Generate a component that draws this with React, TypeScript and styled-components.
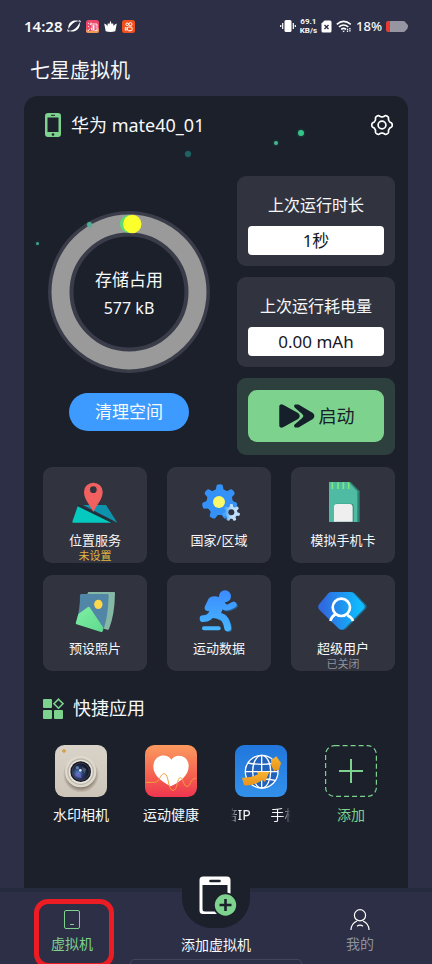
import React from "react";
import styled, { createGlobalStyle, css } from "styled-components";

const color = {
  page: "#2c2f45",
  card: "#1b202b",
  panel: "#31343f",
  green: "#7dd38e",
  blue: "#3d9bff",
  white: "#f7f8fa",
  muted: "#8f919b",
  warn: "#e3b640",
};

const GlobalStyle = createGlobalStyle`
  *, *::before, *::after { box-sizing: border-box; }
  body {
    margin: 0;
    background: ${color.page};
    color: ${color.white};
    font-family: "Noto Sans", "Noto Sans CJK SC", sans-serif;
  }
  button { font: inherit; color: inherit; border: 0; padding: 0; background: none; cursor: pointer; }
  svg { display: block; flex: none; }
  h1, h2, p { margin: 0; font-weight: 400; }
`;

const Page = styled.div`
  min-height: 100vh;
  display: flex;
  flex-direction: column;
  overflow: hidden;
`;

const StatusBar = styled.div`
  height: 52px;
  padding: 0 24px;
  display: flex;
  align-items: center;
  justify-content: space-between;
`;

const StatusGroup = styled.div<{ $gap: number }>`
  display: flex;
  align-items: center;
  gap: ${(p) => p.$gap}px;
`;

const Clock = styled.span`
  font-size: 15px;
  font-weight: 600;
  line-height: 20px;
`;

const Speed = styled.span`
  display: flex;
  flex-direction: column;
  font-family: Roboto, sans-serif;
  font-size: 8px;
  font-weight: 700;
  line-height: 9px;
  text-align: center;
`;

const Percent = styled.span`
  font-size: 13px;
  font-weight: 500;
  line-height: 20px;
`;

const Title = styled.h1`
  padding: 5px 30px 11px;
  font-size: 20px;
  line-height: 28px;
`;

const Card = styled.main`
  position: relative;
  flex: 1;
  margin: 0 24px;
  padding-bottom: 60px;
  background: ${color.card};
  border-radius: 14px 14px 0 0;
`;

const Spark = styled.i<{ $x: number; $y: number; $size: number; $color: string }>`
  position: absolute;
  left: ${(p) => p.$x}px;
  top: ${(p) => p.$y}px;
  width: ${(p) => p.$size}px;
  height: ${(p) => p.$size}px;
  border-radius: 50%;
  background: ${(p) => p.$color};
  box-shadow: 0 0 3px ${(p) => p.$color}66;
`;

const CardHeader = styled.header`
  display: flex;
  align-items: center;
  height: 58px;
  padding: 0 14px 0 21px;
  gap: 10px;
`;

const DeviceName = styled.h2`
  flex: 1;
  font-size: 18px;
  line-height: 24px;
`;

const Overview = styled.section`
  display: grid;
  grid-template-columns: 172fr 158fr;
  gap: 22px;
  padding: 22px 13px 0 19px;
`;

const Storage = styled.div`
  display: flex;
  flex-direction: column;
  align-items: center;
  gap: 20px;
  padding-top: 35px;
`;

const Gauge = styled.div`
  display: grid;
  place-items: center;
  > * { grid-area: 1 / 1; }
`;

const GaugeText = styled.div`
  padding-top: 4px;
  text-align: center;
  line-height: 28px;
`;

const GaugeLabel = styled.p`
  font-size: 17px;
`;

const GaugeValue = styled.p`
  font-size: 16px;
`;

const CleanButton = styled.button`
  width: 120px;
  height: 38px;
  border-radius: 19px;
  background: ${color.blue};
  font-size: 17px;
  line-height: 24px;
`;

const Stats = styled.div`
  display: flex;
  flex-direction: column;
  gap: 11px;
`;

const StatPanel = styled.div`
  display: flex;
  flex-direction: column;
  gap: 9px;
  padding: 17px 11px 11px;
  border-radius: 9px;
  background: ${color.panel};
  text-align: center;
`;

const StatLabel = styled.span`
  font-size: 16px;
  line-height: 24px;
`;

const StatValue = styled.output`
  height: 29px;
  border-radius: 4px;
  background: #fff;
  color: #16181f;
  font-size: 17px;
  line-height: 29px;
`;

const LaunchPanel = styled.div`
  padding: 12px 11px 13px;
  border-radius: 9px;
  background: #2d403d;
`;

const LaunchButton = styled.button`
  width: 100%;
  height: 52px;
  display: flex;
  align-items: center;
  justify-content: center;
  gap: 4px;
  border-radius: 9px;
  background: ${color.green};
  color: #16202b;
  font-size: 18px;
  line-height: 24px;
`;

const Tiles = styled.section`
  display: grid;
  grid-template-columns: repeat(3, 1fr);
  gap: 12px 20px;
  padding: 12px 13px 0 19px;
`;

const Tile = styled.button`
  height: 96px;
  display: flex;
  flex-direction: column;
  align-items: center;
  padding-top: 13px;
  border-radius: 9px;
  background: ${color.panel};
`;

const TileLabel = styled.span`
  margin-top: 7px;
  font-size: 13px;
  line-height: 18px;
`;

const TileNote = styled.span<{ $warn?: boolean }>`
  font-size: 11px;
  line-height: 14px;
  color: ${(p) => (p.$warn ? color.warn : color.muted)};
`;

const ShortcutHeader = styled.header`
  display: flex;
  align-items: center;
  gap: 9px;
  padding: 25px 19px;
`;

const ShortcutTitle = styled.h2`
  font-size: 18px;
  line-height: 24px;
`;

const Apps = styled.section`
  display: grid;
  grid-template-columns: repeat(4, 1fr);
  padding: 0 12px;
`;

const Shortcut = styled.button<{ $accent?: boolean }>`
  display: flex;
  flex-direction: column;
  align-items: center;
  gap: 8px;
  font-size: 14px;
  line-height: 20px;
  color: ${(p) => (p.$accent ? color.green : color.white)};
`;

const Ticker = styled.span`
  display: flex;
  justify-content: center;
  gap: 20px;
  width: 60px;
  overflow: hidden;
  white-space: nowrap;
  mask-image: linear-gradient(90deg, transparent, #000 8px, #000 50px, transparent);
`;

const Nav = styled.nav`
  position: relative;
  height: 76px;
  display: grid;
  grid-template-columns: repeat(3, 1fr);
  border-top: 4px solid #262a3d;
`;

const navLabel = css`
  font-size: 14px;
  line-height: 20px;
`;

const NavItem = styled.button<{ $active?: boolean }>`
  position: relative;
  display: flex;
  flex-direction: column;
  align-items: center;
  justify-content: flex-start;
  gap: 4px;
  padding-top: 17px;
  ${navLabel}
  color: ${(p) => (p.$active ? color.green : color.muted)};
`;

const Highlight = styled.span`
  position: absolute;
  top: 7px;
  bottom: -4px;
  left: 50%;
  width: 80px;
  margin-left: -38px;
  border: 5px solid #ec1c24;
  border-radius: 14px;
`;

const AddItem = styled.button`
  display: flex;
  flex-direction: column;
  align-items: center;
  justify-content: flex-start;
  gap: 7px;
  margin-top: -20px;
  ${navLabel}
`;

const Bubble = styled.span`
  width: 68px;
  height: 56px;
  display: flex;
  justify-content: center;
  padding: 4px 0 0 4px;
  border-radius: 0 0 30px 30px;
  background: ${color.card};
`;

const HomeHandle = styled.span`
  position: absolute;
  left: 30%;
  right: 30%;
  bottom: -3px;
  height: 8px;
  border: 1px solid #42465a;
  border-radius: 4px;
`;

/* Closed path round the origin whose radius swells and dips `teeth` times. */
const lobes = (cx: number, cy: number, r: number, depth: number, teeth: number, sharp: number, phase = 0) => {
  const points: string[] = [];
  for (let i = 0; i < 180; i++) {
    const a = (i / 180) * Math.PI * 2;
    const wave = Math.tanh(Math.cos(teeth * (a - phase)) * sharp) / Math.tanh(sharp);
    const d = r + depth * wave;
    points.push(`${(cx + d * Math.cos(a)).toFixed(2)},${(cy + d * Math.sin(a)).toFixed(2)}`);
  }
  return `M${points.join("L")}Z`;
};

const OrbitIcon = () => (
  <svg width="14" height="14" viewBox="0 0 14 14" fill="#fff">
    <path d="M1.600 10C.4 6 3.500 2 7.500 1.600 9.500 1.300 11 1.500 11.500 2.200 8 2 3.500 5.500 1.600 10Z" />
    <path d="M12.600 3.300C13.800 7 11 11.800 6.500 12.400 4.500 12.700 3 12.500 2.500 11.800 6.500 12 11 8 12.600 3.300Z" />
    <path d="M11.500 2.200Q13.500 1 13.200 3.200M2.500 11.800Q.3 12.800 1 10.500" fill="none" stroke="#fff" strokeWidth="1.100" />
  </svg>
);

const ShopIcon = () => (
  <svg width="13" height="13" viewBox="0 0 13 13" fill="none" stroke="#fff" strokeWidth=".9">
    <rect width="13" height="13" rx="2.500" fill="#ee4668" stroke="none" />
    <path d="M0 9L3 11H10.500L13 8V10.500Q13 13 10.500 13H2.500Q0 13 0 10.500Z" fill="#ed9a55" stroke="none" />
    <path d="M2 3L3.300 4M2 6L3.300 7M2 11L4 8.500M5 2.500L4.500 5M5 4H11V10.500H9M5.500 6H9.500M5.500 8H9.500M7.500 5V10M5.500 8V10H9" />
  </svg>
);

const CrownIcon = () => (
  <svg width="13" height="13" viewBox="0 0 13 13" fill="#fff">
    <path d="M.2 3.600Q2.500 4.200 3.400 6L3.900 3 5.200 4.200 6.500 .8 7.800 4.200 9.100 3 9.600 6Q10.500 4.200 12.800 3.600L11.300 11.200Q6.500 12.600 1.700 11.200Z" />
  </svg>
);

const VideoIcon = () => (
  <svg width="13" height="13" viewBox="0 0 13 13" fill="none" stroke="#fff" strokeWidth="1">
    <rect width="13" height="13" rx="2.500" fill="#f0501e" stroke="none" />
    <circle cx="5.200" cy="4.300" r="1.300" />
    <circle cx="8.400" cy="4.200" r="1.600" />
    <rect x="5.500" y="7" width="4.500" height="3.700" rx="1" />
    <path d="M5.500 8.300L3.300 7.500V10.300L5.500 9.500" />
  </svg>
);

const VibrateIcon = () => (
  <svg width="16" height="14" viewBox="0 0 16 14">
    <rect x="4.500" y="1" width="7" height="12" rx="1.500" fill="#fff" />
    <path d="M2.700 4V10M13.300 4V10M.7 6V8M15.300 6V8" stroke="#fff" strokeWidth="1.200" />
  </svg>
);

const NoSimIcon = () => (
  <svg width="11" height="13" viewBox="0 0 11 13">
    <path d="M3.500 .5H9Q10.500 .5 10.500 2V11Q10.500 12.500 9 12.500H2Q.5 12.500 .5 11V3.500Z" fill="#fff" />
    <path d="M3.500 5L7.500 9M7.500 5L3.500 9" stroke={color.page} strokeWidth="1.400" />
  </svg>
);

const WifiIcon = () => (
  <svg width="16" height="13" viewBox="0 0 16 13" fill="none" stroke="#fff" strokeWidth="1.600">
    <path d="M.8 4.300Q7.500-1.600 14.800 4.300M3 6.900Q7.500 3.200 12.300 6.900M5.200 9.300Q7.500 7.400 10 9.300" />
    <path d="M6.200 10.700H9L7.600 12.300Z" fill="#fff" stroke="none" />
    <path d="M11.500 8.700V12M13.900 8V11.500" strokeWidth="1.300" strokeDasharray="1.500 .6" />
  </svg>
);

const BatteryIcon = () => (
  <svg width="22" height="11" viewBox="0 0 22 11">
    <rect width="20" height="11" rx="3" fill="#9696a3" />
    <path d="M19.500 1.500Q22 3.500 22 5.500T19.500 9.500Z" fill="#9696a3" />
    <path d="M4 0V11H3Q0 11 0 8V3Q0 0 3 0Z" fill="#e9382f" />
  </svg>
);

const PhoneIcon = () => (
  <svg width="16" height="24" viewBox="0 0 16 24">
    <rect width="16" height="24" rx="3" fill={color.green} />
    <rect x="2.500" y="4.500" width="11" height="14.500" fill={color.card} />
    <path d="M6 2.300H10" stroke={color.card} />
    <circle cx="8" cy="21.500" r="1.300" fill={color.card} />
  </svg>
);

const SettingsIcon = () => (
  <svg width="24" height="24" viewBox="-12 -12 24 24" fill="none" stroke="#fff" strokeWidth="1.700">
    <path d={lobes(0, 0, 9.2, 1, 6, 1.6)} strokeLinejoin="round" />
    <circle r="3.900" />
  </svg>
);

const RingChart = () => (
  <svg width="162" height="162" viewBox="0 0 162 162" fill="none">
    <circle cx="81" cy="81" r="68.200" stroke="#3a3d49" strokeWidth="25.500" />
    <circle cx="81" cy="81" r="68.500" stroke="#9a9a9a" strokeWidth="18" />
    <circle cx="81" cy="13" r="9" fill="#5fdc70" />
    <circle cx="84.300" cy="13" r="9.200" fill="#fbff2b" />
  </svg>
);

const ForwardIcon = () => (
  <svg width="37" height="26" viewBox="0 0 37 26" fill="#16202b" stroke="#16202b" strokeLinejoin="round">
    <path d="M2.500 3.500V22.500Q2.500 24 4.500 23.200L19 15.200Q22 13 19 10.800L4.500 2.800Q2.500 2 2.500 3.500Z" strokeWidth="2.500" />
    <path d="M17.500 2.300H20L34 10.500Q37 13 34 15.500L20 23.700H17.500Q16.500 23 17.500 22L24.500 16Q28 13 24.500 10L17.500 4Q16.500 3 17.500 2.300Z" strokeWidth="1.800" />
  </svg>
);

const LocationIcon = () => (
  <svg width="48" height="44" viewBox="141 330 144 132">
    <path d="M177 405H246L280 458Z" fill="#0d93ae" />
    <path d="M163 403L266 452L262 459L158 414Z" fill="#20303b" />
    <path d="M161 409L145 455Q144 458 148 458H262Z" fill="#05c9bf" />
    <path d="M208 426C198 404 180 388 180 365A28 27 0 0 1 236 365C236 388 218 404 208 426Z" fill="#f2605f" />
    <circle cx="208" cy="359" r="10" fill={color.panel} />
  </svg>
);

const RegionIcon = () => (
  <svg width="48" height="44" viewBox="513 330 144 132">
    <defs>
      <linearGradient id="smallGear" x1="0" x2="1">
        <stop offset=".15" stopColor="#4aa5f8" />
        <stop offset=".5" stopColor="#bfe0fc" />
      </linearGradient>
    </defs>
    <path d={lobes(587, 396, 46, 7, 7, 2.5, -1.57)} fill="#3391f8" />
    <circle cx="585" cy="396" r="18" fill="#fbf86a" />
    <path d={lobes(622, 428, 22, 4, 7, 2.5, -1.57)} fill="url(#smallGear)" />
    <circle cx="622" cy="427" r="9" fill={color.panel} />
  </svg>
);

const SimIcon = () => (
  <svg width="48" height="44" viewBox="285 330 144 132">
    <path d="M320 336H380L407 364V456H320Z" fill="#2d8274" />
    <path d="M315 336H374L400 364V456H315Z" fill="#4fbba3" />
    <path d="M325 337V357M342 337V357M358 337V357M374 337V357" stroke="#7fe87b" strokeWidth="5" />
    <path d="M338 401H382Q389 401 389 408V456H338Z" fill="#2d8274" />
    <path d="M330 411Q330 402 339 402H377Q386 402 386 411V455H330Z" fill="#efefef" />
  </svg>
);

const PhotoIcon = () => (
  <svg width="48" height="44" viewBox="141 69 144 132">
    <defs>
      <linearGradient id="hill" x1="0" x2="1" y1="0" y2="1">
        <stop stopColor="#7ff0a2" />
        <stop offset="1" stopColor="#5fd98f" />
      </linearGradient>
    </defs>
    <path d="M193 81H270Q273 81 273 85Q272 150 255 192Q254 195 250 194L215 184L188 90Z" fill="#86b9a5" />
    <path d="M171 87H250Q254 87 254 91Q253 155 237 198L156 176Q169 130 168 90Z" fill="#5286a6" />
    <path d="M163 147L192 126Q195 124 197 127L237 187L236 198Q235 202 231 201L158 178Q154 176 156 172Z" fill="url(#hill)" />
    <ellipse cx="223" cy="118" rx="12.500" ry="14" fill="#fcd84a" />
  </svg>
);

const RunnerIcon = () => (
  <svg width="48" height="44" viewBox="513 69 144 132" fill="none" strokeLinecap="round" strokeLinejoin="round">
    <defs>
      <linearGradient id="run" gradientUnits="userSpaceOnUse" x1="0" x2="0" y1="78" y2="200">
        <stop stopColor="#3b8cff" />
        <stop offset="1" stopColor="#47b8ff" />
      </linearGradient>
    </defs>
    <g stroke="#275d93" transform="translate(3 3)">
      <path d="M590 113L603 127Q610 130 629 119" strokeWidth="18" />
      <path d="M576 148L598 158Q608 168 611 188" strokeWidth="21" />
    </g>
    <g stroke="url(#run)">
      <path d="M552 128L562 107Q568 101 585 107" strokeWidth="20" />
      <path d="M586 114L573 143" strokeWidth="34" />
      <path d="M590 113L603 127Q610 130 629 119" strokeWidth="18" />
      <path d="M566 141Q558 161 537 161" strokeWidth="20" />
      <path d="M576 148L598 158Q608 168 611 188" strokeWidth="21" />
      <path d="M540 190H584" strokeWidth="12" />
    </g>
    <circle cx="603" cy="94" r="18" fill="url(#run)" />
  </svg>
);

const SuperUserIcon = () => (
  <svg width="48" height="44" viewBox="285 69 144 132" overflow="visible">
    <defs>
      <linearGradient id="shield" x1="0" x2="1">
        <stop offset=".1" stopColor="#2f6ae0" />
        <stop offset=".9" stopColor="#0fbcff" />
      </linearGradient>
    </defs>
    <path d="M326 81H384Q390 81 394 86L425 118Q431 125 425 132L368 190Q358 199 348 190L292 132Z" fill="#1f6d92" />
    <path d="M322 81H380Q386 81 390 86L419 118Q425 125 419 132L362 190Q353 199 343 190L286 134Q279 125 286 117L313 85Q317 81 322 81Z" fill="url(#shield)" />
    <g fill="none" stroke="#fff" strokeWidth="8">
      <circle cx="352" cy="127" r="26" />
      <path d="M335 147Q323 154 319 168M370 151Q383 157 387 168" />
    </g>
  </svg>
);

const GridIcon = () => (
  <svg width="21" height="21" viewBox="0 0 21 21" fill={color.green}>
    <rect x="0" y="1" width="9" height="9" rx="1" />
    <rect x="0" y="12" width="9" height="9" rx="1" />
    <rect x="11" y="12" width="9" height="9" rx="1" />
    <path d="M15.500 1.200L20 5.700L15.500 10.200L11 5.700Z" fill="none" stroke={color.green} strokeWidth="1.600" />
  </svg>
);

const CameraApp = () => (
  <svg width="52" height="52" viewBox="0 0 156 156">
    <defs>
      <linearGradient id="body" x1="0" x2="0" y1="0" y2="1">
        <stop stopColor="#d9d3c9" />
        <stop offset="1" stopColor="#cdc5b8" />
      </linearGradient>
      <radialGradient id="lens" cx=".35" cy=".6" r=".7">
        <stop stopColor="#5a8ad0" />
        <stop offset=".45" stopColor="#27365e" />
        <stop offset="1" stopColor="#0d0f18" />
      </radialGradient>
      <radialGradient id="lensShadow">
        <stop offset=".7" stopColor="#85796a" />
        <stop offset="1" stopColor="#85796a" stopOpacity="0" />
      </radialGradient>
    </defs>
    <rect width="156" height="156" rx="28" fill="url(#body)" />
    <path d="M27 11L34 18L27 25L20 18Z" fill="#d1a247" />
    <circle cx="78" cy="89" r="54" fill="url(#lensShadow)" />
    <circle cx="77" cy="80" r="47" fill="#ded9cf" />
    <circle cx="77" cy="80" r="40" fill="#bdb6aa" />
    <circle cx="77" cy="80" r="36" fill="#e9e5de" />
    <circle cx="77" cy="80" r="31" fill="#14161f" />
    <circle cx="77" cy="80" r="26" fill="url(#lens)" stroke="#4b5068" strokeWidth="2" />
    <path d="M60 88Q66 100 80 99L76 84Z" fill="#6f65c8" opacity=".7" />
    <path d="M80 66L94 72L88 86Z" fill="#5c6c80" opacity=".7" />
    <circle cx="76" cy="76" r="4" fill="#dcecff" />
    <circle cx="67" cy="68" r="5" fill="#6a8fb5" opacity=".8" />
  </svg>
);

const HealthApp = () => (
  <svg width="52" height="52" viewBox="0 0 156 156">
    <defs>
      <linearGradient id="warm" x1="0" x2="0" y1="0" y2="1">
        <stop stopColor="#fb9a5f" />
        <stop offset=".6" stopColor="#f5604f" />
        <stop offset="1" stopColor="#ee3550" />
      </linearGradient>
    </defs>
    <rect width="156" height="156" rx="28" fill="url(#warm)" />
    <path d="M79 44C66 24 26 27 25 65C25 94 56 112 77 124C103 112 132 92 131 62C130 28 91 24 79 44Z" fill="#fff" />
    <path d="M2 112H28C46 112 44 86 58 86C72 86 68 136 84 136C99 136 95 98 106 98C116 98 114 124 126 124C138 124 134 101 154 99" fill="none" stroke="#f5a03f" strokeWidth="3" />
  </svg>
);

const GlobeApp = () => (
  <svg width="52" height="52" viewBox="0 0 156 156">
    <defs>
      <linearGradient id="sky" x1="0" x2="0" y1="0" y2="1">
        <stop stopColor="#2177dc" />
        <stop offset="1" stopColor="#3391ea" />
      </linearGradient>
      <linearGradient id="gold" x1="0" x2="0" y1="0" y2="1">
        <stop stopColor="#f8b52f" />
        <stop offset="1" stopColor="#e8921c" />
      </linearGradient>
    </defs>
    <rect width="156" height="156" rx="28" fill="url(#sky)" />
    <circle cx="80" cy="80" r="49" fill="#2162bd" />
    <g fill="none" stroke="#fff" strokeWidth="4">
      <circle cx="80" cy="80" r="49" />
      <ellipse cx="80" cy="80" rx="27" ry="49" />
      <path d="M80 31V129M31 80H129M39 54Q80 62 121 54M39 106Q80 98 121 106" />
    </g>
    <path d="M108 46L124 34L138 54L132 74L117 78L109 62Z" fill="url(#gold)" />
    <path d="M21 98Q40 101 69 88L65 80L103 81L90 111L83 105Q54 124 27 121Z" fill="url(#gold)" />
  </svg>
);

const AddApp = () => (
  <svg width="52" height="52" viewBox="0 0 52 52" fill="none" stroke={color.green}>
    <rect x=".6" y=".6" width="50.800" height="50.800" rx="9" strokeDasharray="5 3" strokeWidth="1.200" />
    <path d="M26 14V38M14 26H38" strokeWidth="2" />
  </svg>
);

const TabletIcon = () => (
  <svg width="18" height="21" viewBox="0 0 18 21" fill="none" stroke={color.green} strokeWidth="1">
    <rect x="1.500" y="1.500" width="15" height="18" rx="1.500" />
    <path d="M7 15.500H11" />
  </svg>
);

const PersonIcon = () => (
  <svg width="20" height="21" viewBox="0 0 20 21" fill="none" stroke="#fff" strokeWidth="1.200">
    <circle cx="10" cy="6.300" r="5.600" />
    <path d="M.9 21.500C1 17 3.500 13.500 7 12M19.100 21.500C19 17 16.500 13.500 13 12M7 17.200Q10 15 13 17.200" />
  </svg>
);

const AddPhoneIcon = () => (
  <svg width="38" height="40" viewBox="0 0 38 40">
    <path fillRule="evenodd" d="M4 .5H28Q31.500 .5 31.500 4V36Q31.500 38 29.500 38H4Q.5 38 .5 34.500V4Q.5 .5 4 .5ZM3.500 9V33Q3.500 35.500 6 35.500H28.500V9Z" fill="#fff" />
    <path d="M11.500 5H20.500" stroke={color.card} strokeWidth="2.600" strokeLinecap="round" />
    <circle cx="26.500" cy="29" r="12.500" fill={color.card} />
    <circle cx="26.500" cy="29" r="10.700" fill={color.green} />
    <path d="M26.500 23V35M20.500 29H32.500" stroke={color.card} strokeWidth="2.600" />
  </svg>
);

const sparks = [
  { x: 161, y: 55, size: 6, color: "#1f6365" },
  { x: 250, y: 45, size: 4, color: "#42b890" },
  { x: 274, y: 34, size: 6, color: "#35c488" },
  { x: 63, y: 126, size: 5, color: "#4fb096" },
  { x: 12, y: 146, size: 3, color: "#3fa58a" },
];

const stats = [
  { label: "上次运行时长", value: "1秒" },
  { label: "上次运行耗电量", value: "0.00 mAh" },
];

const tiles = [
  { label: "位置服务", icon: <LocationIcon />, note: "未设置", warn: true },
  { label: "国家/区域", icon: <RegionIcon /> },
  { label: "模拟手机卡", icon: <SimIcon /> },
  { label: "预设照片", icon: <PhotoIcon /> },
  { label: "运动数据", icon: <RunnerIcon /> },
  { label: "超级用户", icon: <SuperUserIcon />, note: "已关闭" },
];

export default function App() {
  return (
    <Page>
      <GlobalStyle />
      <StatusBar>
        <StatusGroup $gap={5}>
          <Clock>14:28</Clock>
          <OrbitIcon />
          <ShopIcon />
          <CrownIcon />
          <VideoIcon />
        </StatusGroup>
        <StatusGroup $gap={4}>
          <VibrateIcon />
          <Speed>
            <span>69.1</span>
            <span>KB/s</span>
          </Speed>
          <NoSimIcon />
          <WifiIcon />
          <Percent>18%</Percent>
          <BatteryIcon />
        </StatusGroup>
      </StatusBar>
      <Title>七星虚拟机</Title>
      <Card>
        <CardHeader>
          <PhoneIcon />
          <DeviceName>华为 mate40_01</DeviceName>
          <button aria-label="设置">
            <SettingsIcon />
          </button>
        </CardHeader>
        <Overview>
          <Storage>
            <Gauge>
              <RingChart />
              <GaugeText>
                <GaugeLabel>存储占用</GaugeLabel>
                <GaugeValue>577 kB</GaugeValue>
              </GaugeText>
            </Gauge>
            <CleanButton>清理空间</CleanButton>
          </Storage>
          <Stats>
            {stats.map((s) => (
              <StatPanel key={s.label}>
                <StatLabel>{s.label}</StatLabel>
                <StatValue aria-label={s.label}>{s.value}</StatValue>
              </StatPanel>
            ))}
            <LaunchPanel>
              <LaunchButton>
                <ForwardIcon />
                启动
              </LaunchButton>
            </LaunchPanel>
          </Stats>
        </Overview>
        <Tiles>
          {tiles.map((t) => (
            <Tile key={t.label}>
              {t.icon}
              <TileLabel>{t.label}</TileLabel>
              {t.note && <TileNote $warn={t.warn}>{t.note}</TileNote>}
            </Tile>
          ))}
        </Tiles>
        <ShortcutHeader>
          <GridIcon />
          <ShortcutTitle>快捷应用</ShortcutTitle>
        </ShortcutHeader>
        <Apps>
          <Shortcut>
            <CameraApp />
            水印相机
          </Shortcut>
          <Shortcut>
            <HealthApp />
            运动健康
          </Shortcut>
          <Shortcut>
            <GlobeApp />
            <Ticker>
              <span>倍IP</span>
              <span>手机</span>
            </Ticker>
          </Shortcut>
          <Shortcut $accent>
            <AddApp />
            添加
          </Shortcut>
        </Apps>
        {sparks.map((s) => (
          <Spark key={s.x} $x={s.x} $y={s.y} $size={s.size} $color={s.color} />
        ))}
      </Card>
      <Nav>
        <NavItem $active>
          <Highlight />
          <TabletIcon />
          虚拟机
        </NavItem>
        <AddItem>
          <Bubble>
            <AddPhoneIcon />
          </Bubble>
          添加虚拟机
        </AddItem>
        <NavItem>
          <PersonIcon />
          我的
        </NavItem>
        <HomeHandle />
      </Nav>
    </Page>
  );
}
